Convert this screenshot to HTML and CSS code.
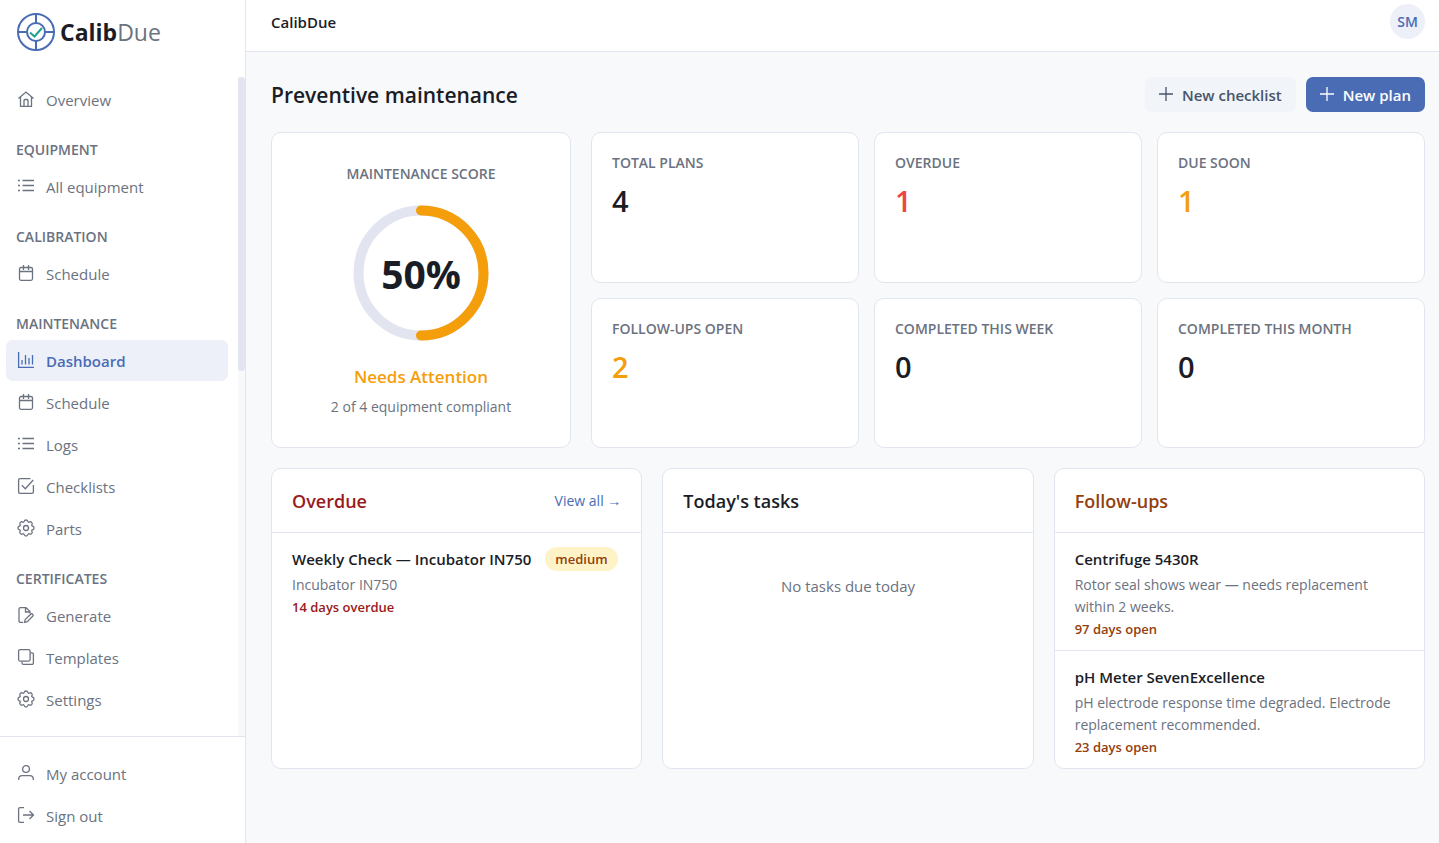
FILE: index.html
```
<!DOCTYPE html>
<html lang="en">
<head>
    <meta charset="UTF-8">
    <meta name="viewport" content="width=device-width, initial-scale=1.0">
    <title>Preventive maintenance - CalibDue</title>
    <link rel="stylesheet" href="styles.css">
</head>
<body>
    <!-- Icon set -->
    <svg class="sprite" aria-hidden="true">
        <symbol id="i-home" viewBox="0 0 16 16"><path d="M.5 7.500 8 1l7.500 6.500M2.500 6v9.400h11V6M6 15.400V9.500a1 1 0 0 1 1-1h2a1 1 0 0 1 1 1v5.900"/></symbol>
        <symbol id="i-list" viewBox="0 0 16 16"><path d="M4.500 2.500H16M4.500 7.500H16M4.500 12.500H16M0 2.500h2M0 7.500h2M0 12.500h2"/></symbol>
        <symbol id="i-calendar" viewBox="0 0 16 16"><rect x="1.500" y="2.500" width="13" height="12.800" rx="1.500"/><path d="M1.500 6.500h13M5.500 0v5M10.500 0v5"/></symbol>
        <symbol id="i-chart" viewBox="0 0 16 16"><path d="M.6 0v15.400H16M4 12.500V8M7.500 12.500V3M11 12.500V6M14.500 12.500V3"/></symbol>
        <symbol id="i-check" viewBox="0 0 16 16"><path d="M12.500.6H2A1.400 1.400 0 0 0 .6 2v12A1.400 1.400 0 0 0 2 15.400h12a1.400 1.400 0 0 0 1.400-1.400V7M3.800 7.200l3.500 3.500L15.200 2"/></symbol>
        <symbol id="i-gear" viewBox="0 0 16 16"><path d="M9.796 1.343c-.527-1.790-3.065-1.790-3.592 0l-.094.319a.873.873 0 0 1-1.255.52l-.292-.16c-1.640-.892-3.433.902-2.540 2.541l.159.292a.873.873 0 0 1-.52 1.255l-.319.094c-1.790.527-1.790 3.065 0 3.592l.319.094a.873.873 0 0 1 .52 1.255l-.16.292c-.892 1.640.901 3.434 2.541 2.540l.292-.159a.873.873 0 0 1 1.255.52l.094.319c.527 1.790 3.065 1.790 3.592 0l.094-.319a.873.873 0 0 1 1.255-.52l.292.16c1.640.893 3.434-.902 2.540-2.541l-.159-.292a.873.873 0 0 1 .52-1.255l.319-.094c1.790-.527 1.790-3.065 0-3.592l-.319-.094a.873.873 0 0 1-.52-1.255l.16-.292c.893-1.640-.902-3.433-2.541-2.540l-.292.159a.873.873 0 0 1-1.255-.52z"/><circle cx="8" cy="8" r="2.500"/></symbol>
        <symbol id="i-generate" viewBox="0 0 16 16"><path d="M5 15.400H2.500A1.500 1.500 0 0 1 1 13.900V2A1.500 1.500 0 0 1 2.500.6H8l4 4v1.800M7.500.6V5H12M6.500 15.300l.7-2.800 5.500-5.300a1.400 1.400 0 0 1 2 2l-5.400 5.400z"/></symbol>
        <symbol id="i-copy" viewBox="0 0 16 16"><rect x=".6" y=".6" width="11.500" height="11.500" rx="1.500"/><path d="M12.500 3.800h1.400a1.500 1.500 0 0 1 1.500 1.500v8.600a1.500 1.500 0 0 1-1.500 1.500H5.500A1.500 1.500 0 0 1 4 13.900v-1.400"/></symbol>
        <symbol id="i-user" viewBox="0 0 16 16"><circle cx="8" cy="4" r="3.400"/><path d="M.7 15v-1a3.500 3.500 0 0 1 3.500-3.400h7.600a3.500 3.500 0 0 1 3.500 3.400v1"/></symbol>
        <symbol id="i-logout" viewBox="0 0 16 16"><path d="M6 .6H2A1.400 1.400 0 0 0 .6 2v12A1.400 1.400 0 0 0 2 15.400h4M5 8h10.500M11.500 4l4 4-4 4"/></symbol>
        <symbol id="i-plus" viewBox="0 0 14 14"><path d="M7 0v14M0 7h14"/></symbol>
    </svg>

    <div class="app">
        <aside class="sidebar">
            <a class="brand" href="#">
                <svg class="brand-mark" viewBox="0 0 38 38" aria-hidden="true">
                    <circle cx="19" cy="19" r="18"/>
                    <circle cx="19" cy="19" r="9"/>
                    <path d="M19 1v9M19 28v9M1 19h9M28 19h9"/>
                    <path class="tick" d="M13 19.500l4.500 4L25 15"/>
                </svg>
                <span><b>Calib</b>Due</span>
            </a>

            <div class="nav-wrap">
                <nav class="nav">
                    <a class="nav-item" href="#"><svg class="icon"><use href="#i-home"/></svg>Overview</a>
                    <h2 class="nav-title">EQUIPMENT</h2>
                    <a class="nav-item" href="#"><svg class="icon"><use href="#i-list"/></svg>All equipment</a>
                    <h2 class="nav-title">CALIBRATION</h2>
                    <a class="nav-item" href="#"><svg class="icon"><use href="#i-calendar"/></svg>Schedule</a>
                    <h2 class="nav-title">MAINTENANCE</h2>
                    <a class="nav-item active" href="#"><svg class="icon"><use href="#i-chart"/></svg>Dashboard</a>
                    <a class="nav-item" href="#"><svg class="icon"><use href="#i-calendar"/></svg>Schedule</a>
                    <a class="nav-item" href="#"><svg class="icon"><use href="#i-list"/></svg>Logs</a>
                    <a class="nav-item" href="#"><svg class="icon"><use href="#i-check"/></svg>Checklists</a>
                    <a class="nav-item" href="#"><svg class="icon"><use href="#i-gear"/></svg>Parts</a>
                    <h2 class="nav-title">CERTIFICATES</h2>
                    <a class="nav-item" href="#"><svg class="icon"><use href="#i-generate"/></svg>Generate</a>
                    <a class="nav-item" href="#"><svg class="icon"><use href="#i-copy"/></svg>Templates</a>
                    <a class="nav-item" href="#"><svg class="icon"><use href="#i-gear"/></svg>Settings</a>
                </nav>
                <div class="nav-scroll"><div class="nav-thumb"></div></div>
            </div>

            <div class="nav-footer">
                <a class="nav-item" href="#"><svg class="icon"><use href="#i-user"/></svg>My account</a>
                <a class="nav-item" href="#"><svg class="icon"><use href="#i-logout"/></svg>Sign out</a>
            </div>
        </aside>

        <div class="main">
            <header class="topbar">
                <span class="topbar-title">CalibDue</span>
                <button class="avatar" type="button">SM</button>
            </header>

            <main class="content">
                <div class="page-head">
                    <h1>Preventive maintenance</h1>
                    <div class="actions">
                        <button class="btn btn-light" type="button"><svg class="icon-plus"><use href="#i-plus"/></svg>New checklist</button>
                        <button class="btn btn-primary" type="button"><svg class="icon-plus"><use href="#i-plus"/></svg>New plan</button>
                    </div>
                </div>

                <div class="summary">
                    <section class="card score">
                        <div class="label">MAINTENANCE SCORE</div>
                        <div class="ring">
                            <svg viewBox="0 0 120 120" aria-hidden="true">
                                <circle class="ring-track" cx="60" cy="60" r="50"/>
                                <circle class="ring-value" cx="60" cy="60" r="50" pathLength="100" stroke-dasharray="50 100" transform="rotate(-90 60 60)"/>
                            </svg>
                            <span>50%</span>
                        </div>
                        <div class="score-status">Needs Attention</div>
                        <div class="score-note">2 of 4 equipment compliant</div>
                    </section>

                    <div class="stats">
                        <div class="card stat"><div class="label">TOTAL PLANS</div><div class="value">4</div></div>
                        <div class="card stat"><div class="label">OVERDUE</div><div class="value red">1</div></div>
                        <div class="card stat"><div class="label">DUE SOON</div><div class="value amber">1</div></div>
                        <div class="card stat"><div class="label">FOLLOW-UPS OPEN</div><div class="value amber">2</div></div>
                        <div class="card stat"><div class="label">COMPLETED THIS WEEK</div><div class="value">0</div></div>
                        <div class="card stat"><div class="label">COMPLETED THIS MONTH</div><div class="value">0</div></div>
                    </div>
                </div>

                <div class="panels">
                    <section class="card">
                        <div class="card-head">
                            <h2 class="danger">Overdue</h2>
                            <a href="#">View all →</a>
                        </div>
                        <div class="item">
                            <div class="item-name">Weekly Check — Incubator IN750 <span class="badge">medium</span></div>
                            <div class="item-text">Incubator IN750</div>
                            <div class="item-days danger">14 days overdue</div>
                        </div>
                    </section>

                    <section class="card">
                        <div class="card-head"><h2>Today's tasks</h2></div>
                        <p class="empty">No tasks due today</p>
                    </section>

                    <section class="card">
                        <div class="card-head"><h2 class="warn">Follow-ups</h2></div>
                        <div class="item">
                            <div class="item-name">Centrifuge 5430R</div>
                            <div class="item-text">Rotor seal shows wear — needs replacement within 2 weeks.</div>
                            <div class="item-days warn">97 days open</div>
                        </div>
                        <div class="item">
                            <div class="item-name">pH Meter SevenExcellence</div>
                            <div class="item-text">pH electrode response time degraded. Electrode replacement recommended.</div>
                            <div class="item-days warn">23 days open</div>
                        </div>
                    </section>
                </div>
            </main>
        </div>
    </div>
</body>
</html>
```
FILE: styles.css
```
* {
    box-sizing: border-box;
}
body {
    margin: 0;
    font-family: "Segoe UI", "Open Sans", "Noto Sans", sans-serif;
    font-size: 15px;
    line-height: 22px;
    color: #1a1d26;
    background: #f8f9fb;
}
h1, h2, p {
    margin: 0;
}
a {
    color: #4a6cb5;
    text-decoration: none;
}
button {
    font-family: inherit;
    border: none;
    cursor: pointer;
}
.sprite {
    display: none;
}
symbol {
    fill: none;
    stroke: currentColor;
    stroke-width: 1.3;
    overflow: visible;
}
.app {
    display: flex;
    min-height: 100vh;
}

/* Sidebar */
.sidebar {
    position: sticky;
    top: 0;
    width: 246px;
    height: 100vh;
    flex-shrink: 0;
    display: flex;
    flex-direction: column;
    background: #fff;
    border-right: 1px solid #e2e5ef;
}
.brand {
    display: flex;
    align-items: center;
    gap: 5px;
    height: 77px;
    flex-shrink: 0;
    padding: 0 17px 13px;
    font-size: 23px;
    color: #6b7280;
}
.brand b {
    color: #1a1d26;
}
.brand-mark {
    width: 38px;
    height: 38px;
    fill: none;
    stroke: #4a6cb5;
    stroke-width: 2;
}
.brand-mark .tick {
    stroke: #1fa38a;
}
.nav-wrap {
    display: flex;
    flex: 1;
    min-height: 0;
}
.nav {
    flex: 1;
    padding: 2px 10px 0 6px;
    overflow: hidden;
}
.nav-scroll {
    width: 7px;
    background: #f8f9fb;
}
.nav-thumb {
    height: 294px;
    border-radius: 4px;
    background: #e2e5ef;
}
.nav-title {
    padding: 20px 10px 7px;
    font-size: 14px;
    font-weight: 600;
    line-height: 18px;
    color: #6b7280;
}
.nav-item {
    display: flex;
    align-items: center;
    gap: 12px;
    height: 41px;
    margin-bottom: 1px;
    padding: 0 12px;
    border-radius: 7px;
    color: #6b7280;
}
.nav-item.active {
    background: #edf0f8;
    color: #4a6cb5;
    font-weight: 600;
}
.icon {
    width: 16px;
    height: 16px;
    margin-bottom: 1px;
    overflow: visible;
}
.nav-footer {
    padding: 16px 17px 6px 6px;
    border-top: 1px solid #e2e5ef;
}

/* Main column */
.main {
    flex: 1;
    min-width: 0;
}
.topbar {
    display: flex;
    justify-content: space-between;
    align-items: center;
    padding: 4px 14px 12px 25px;
    background: #fff;
    border-bottom: 1px solid #e2e5ef;
}
.topbar-title {
    font-weight: 600;
}
.avatar {
    width: 35px;
    height: 35px;
    padding: 0;
    border-radius: 50%;
    background: #edf0f8;
    color: #4a6cb5;
    font-size: 14px;
    font-weight: 600;
}
.content {
    padding: 25px 14px 25px 25px;
}
.page-head {
    display: flex;
    justify-content: space-between;
    align-items: center;
    margin-bottom: 20px;
}
h1 {
    font-size: 21px;
    font-weight: 600;
    line-height: 36px;
}
.page-head {
    height: 35px;
}
.actions {
    display: flex;
    gap: 10px;
}
.btn {
    display: flex;
    align-items: center;
    gap: 9px;
    height: 35px;
    padding: 0 14px;
    border-radius: 7px;
    font-size: 15px;
    font-weight: 600;
}
.btn-light {
    background: #f1f4f9;
    color: #475569;
}
.btn-primary {
    background: #4a6cb5;
    color: #fff;
}
.icon-plus {
    width: 14px;
    height: 14px;
    margin-bottom: 2px;
}

/* Cards */
.card {
    background: #fff;
    border: 1px solid #e2e5ef;
    border-radius: 10px;
}
.label {
    font-size: 14px;
    font-weight: 600;
    line-height: 20px;
    color: #6b7280;
}
.summary {
    display: grid;
    grid-template-columns: 300px 1fr;
    gap: 20px;
    margin-bottom: 20px;
}
.score {
    padding: 31px 20px 29px;
    text-align: center;
}
.ring {
    position: relative;
    width: 150px;
    height: 150px;
    margin: 14px auto 17px;
}
.ring svg {
    display: block;
    width: 100%;
    height: 100%;
    fill: none;
    stroke-width: 8;
}
.ring-track {
    stroke: #e2e5ef;
}
.ring-value {
    stroke: #f59e0b;
    stroke-linecap: round;
}
.ring span {
    position: absolute;
    inset: 0;
    font-size: 39px;
    font-weight: 700;
    line-height: 152px;
}
.score-status {
    margin-bottom: 7px;
    font-size: 17px;
    font-weight: 600;
    line-height: 24px;
    color: #f59e0b;
}
.score-note {
    font-size: 14px;
    color: #6b7280;
}
.stats {
    display: grid;
    grid-template-columns: repeat(3, 1fr);
    gap: 15px;
}
.stat {
    padding: 20px;
}
.value {
    margin-top: 8px;
    font-size: 29px;
    font-weight: 600;
    line-height: 40px;
}
.red {
    color: #ef4444;
}
.amber {
    color: #f59e0b;
}
.danger {
    color: #991b1b;
}
.warn {
    color: #92400e;
}
.panels {
    display: grid;
    grid-template-columns: repeat(3, 1fr);
    gap: 20px;
}
.card-head {
    display: flex;
    justify-content: space-between;
    align-items: center;
    height: 64px;
    padding: 0 20px;
    border-bottom: 1px solid #e2e5ef;
}
.card-head h2 {
    font-size: 18px;
    font-weight: 600;
}
.card-head a {
    font-size: 14px;
}
.item {
    padding: 14px 20px 10px;
}
.item + .item {
    border-top: 1px solid #e2e5ef;
}
.item-name {
    display: flex;
    align-items: center;
    gap: 14px;
    height: 23px;
    margin-bottom: 4px;
    font-weight: 600;
    white-space: nowrap;
}
.item-text {
    font-size: 14px;
    color: #6b7280;
}
.item-days {
    font-size: 13px;
    font-weight: 600;
}
.badge {
    padding: 1px 10px;
    border-radius: 12px;
    background: #fef3c7;
    color: #92400e;
    font-size: 13px;
}
.empty {
    padding: 42px 20px;
    text-align: center;
    color: #6b7280;
}
```
